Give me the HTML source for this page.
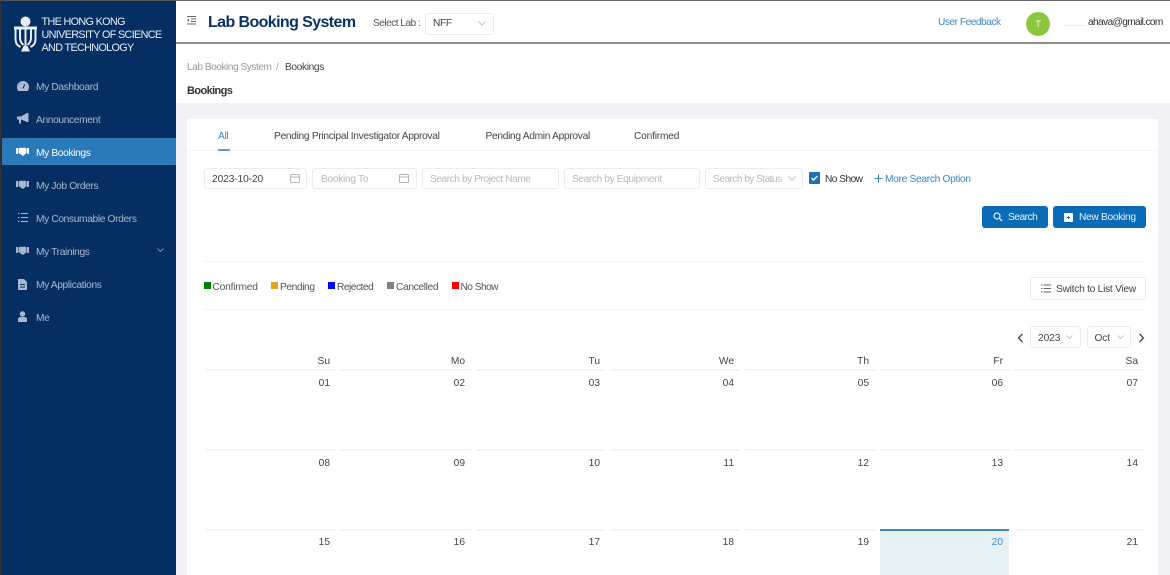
<!DOCTYPE html>
<html lang="en"><head><meta charset="utf-8"><title>Bookings</title>
<style>
html,body{margin:0;padding:0;width:1170px;height:575px;overflow:hidden;background:#fff;font-family:"Liberation Sans",sans-serif;color:#333}
*{box-sizing:border-box}
.a{position:absolute}
.t{position:absolute;white-space:nowrap;font-size:10.2px;line-height:14px;letter-spacing:-.35px;margin-top:1px}
.d{margin-top:2px}
.side{position:absolute;left:0;top:0;width:176px;height:575px;background:#052f63;border-left:1px solid #333;border-top:1px solid #555}
.nav{color:#a9b8cd;margin-top:2px}
.box{position:absolute;border:1px solid #ececec;border-radius:3px;background:#fff;height:22px}
.ph{color:#b9b9b9}
.btn{position:absolute;background:#0a6cb7;border-radius:3px;height:22px;top:206px}
.dl{position:absolute;background:#f3f3f5;height:2px}
.hd{position:absolute;white-space:nowrap;font-size:10.2px;line-height:14px;text-align:right;color:#444;width:40px;margin-top:2px}
.lg{position:absolute;white-space:nowrap;font-size:10.8px;line-height:14px;letter-spacing:-.65px;color:#e8edf3;left:41.5px}
svg{position:absolute;display:block}
</style></head><body>
<div class="a" style="left:0;top:0;width:1170px;height:1px;background:#666"></div>
<div class="a" style="left:176px;top:42px;width:994px;height:2px;background:#8c8c8c"></div>
<div class="a" style="left:176px;top:103px;width:994px;height:472px;background:#f0f2f6"></div>
<div class="a" style="left:187px;top:119px;width:971px;height:456px;background:#fff"></div>

<div class="side"></div>
<svg style="left:14px;top:16px" width="24" height="38" viewBox="0 0 24 38"><circle cx="11.500" cy="5.500" r="5" fill="#e8edf3"/><path d="M0 10.500h23v3H0z" fill="#e8edf3"/><path d="M1.500 13v10q0 6 5 8M21.500 13v10q0 6-5 8M6 13v9q0 4 3.500 7M17 13v9q0 4-3.500 7M11.500 13v18" fill="none" stroke="#e8edf3" stroke-width="2"/><path d="M9.500 30h4l2.500 5.500H7z" fill="#e8edf3"/></svg>
<div class="lg" style="top:15px">THE HONG KONG</div>
<div class="lg" style="top:28px">UNIVERSITY OF SCIENCE</div>
<div class="lg" style="top:41px">AND TECHNOLOGY</div>

<div class="a" style="left:2px;top:138px;width:174px;height:27px;background:#2a79b8"></div>

<svg style="left:17px;top:81px" width="12" height="10" viewBox="0 0 12 10"><path d="M6 0a6 6 0 0 0-6 6q0 2 1 4h10q1-2 1-4a6 6 0 0 0-6-6zM5.500 7l2-4 .8.400L6.500 7.500z" fill="#a9b8cd"/></svg>
<div class="t nav" style="left:36px;top:79px">My Dashboard</div>
<svg style="left:17px;top:113px" width="12" height="11" viewBox="0 0 12 11"><path d="M0 3.500h4L10 0h1.500v9H10L4 6.500v4H2v-4H0z" fill="#a9b8cd"/></svg>
<div class="t nav" style="left:36px;top:112px">Announcement</div>

<svg style="left:16px;top:147px" width="13" height="9" viewBox="0 0 13 9"><path d="M0 1h2v6H0zM11 1h2v6h-2zM2.500 1.500L5 .5l1.500.5L8.500.5l2 1v4.500L7 9 2.500 6z" fill="#fff"/></svg>
<div class="t nav" style="left:36px;top:145px;color:#fff">My Bookings</div>
<svg style="left:16px;top:180px" width="13" height="9" viewBox="0 0 13 9"><path d="M0 1h2v6H0zM11 1h2v6h-2zM2.500 1.500L5 .5l1.500.5L8.500.5l2 1v4.500L7 9 2.500 6z" fill="#a9b8cd"/></svg>
<div class="t nav" style="left:36px;top:178px">My Job Orders</div>
<svg style="left:18px;top:213px" width="10" height="9" viewBox="0 0 10 9"><path d="M3 0h7v1H3zM3 4h7v1H3zM3 8h7v1H3zM0 0h1.500v1H0zM0 4h1.500v1H0zM0 8h1.500v1H0z" fill="#a9b8cd"/></svg>
<div class="t nav" style="left:36px;top:211px">My Consumable Orders</div>
<svg style="left:16px;top:246px" width="13" height="9" viewBox="0 0 13 9"><path d="M0 1h2v6H0zM11 1h2v6h-2zM2.500 1.500L5 .5l1.500.5L8.500.5l2 1v4.500L7 9 2.500 6z" fill="#a9b8cd"/></svg>
<div class="t nav" style="left:36px;top:244px">My Trainings</div>
<svg style="left:157px;top:248px" width="7" height="4" viewBox="0 0 7 4"><path d="M.5.500l3 3 3-3" fill="none" stroke="#7f93ae"/></svg>
<svg style="left:18px;top:279px" width="9" height="11" viewBox="0 0 9 11"><path d="M0 0h6l3 3v8H0zM2 5v1h5V5zM2 7.500v1h5v-1z" fill="#a9b8cd"/></svg>
<div class="t nav" style="left:36px;top:277px">My Applications</div>
<svg style="left:18px;top:311px" width="9" height="11" viewBox="0 0 9 11"><circle cx="4.500" cy="3" r="2.700" fill="#a9b8cd"/><path d="M0 11V8.500Q0 6 3 6h3q3 0 3 2.500V11z" fill="#a9b8cd"/></svg>
<div class="t nav" style="left:36px;top:310px">Me</div>

<svg style="left:187px;top:16px" width="10" height="9" viewBox="0 0 10 9"><path d="M0 0h9v1H0zM4 2.500h5v1H4zM4 5h5v1H4zM0 7.500h9v1H0zM0 4.200l2-1.700v3.400z" fill="#666"/></svg>
<div class="t" style="left:208px;top:12px;font-size:16px;line-height:20px;font-weight:bold;color:#0a3266;letter-spacing:-.6px">Lab Booking System</div>
<div class="t" style="left:373px;top:16px;color:#555;letter-spacing:-.55px">Select Lab :</div>
<div class="box" style="left:425px;top:13px;width:69px"></div>
<div class="t" style="left:433px;top:16px;color:#444">NFF</div>
<svg style="left:478px;top:21px" width="8" height="5" viewBox="0 0 8 5"><path d="M.5.500L4 4 7.500.500" fill="none" stroke="#c4c4c4"/></svg>
<div class="t" style="left:938px;top:15px;color:#3f87c2;letter-spacing:-.5px">User Feedback</div>
<div class="a" style="left:1026px;top:12px;width:24px;height:24px;border-radius:50%;background:#8cc63f"></div>
<div class="t" style="left:1026px;top:16px;width:24px;text-align:center;color:#fff;font-size:9px">T</div>
<div class="a" style="left:1065px;top:24.500px;width:21px;height:1px;background:#efefef"></div>
<div class="t" style="left:1088px;top:15px;color:#333;letter-spacing:-.65px">ahava@gmail.com</div>

<div class="t" style="left:187px;top:60px;color:#9a9a9a;letter-spacing:-.5px">Lab Booking System</div>
<div class="t" style="left:276px;top:60px;color:#aaa">/</div>
<div class="t" style="left:285px;top:60px;color:#444;letter-spacing:-.37px">Bookings</div>
<div class="t" style="left:187px;top:82.500px;font-size:11px;font-weight:bold;color:#333;letter-spacing:-.6px">Bookings</div>

<div class="t d" style="left:218px;top:128px;color:#3d88c6">All</div>
<div class="a" style="left:187px;top:150px;width:971px;height:1px;background:#f5f5f6"></div>
<div class="a" style="left:218px;top:149px;width:12px;height:2px;background:#5b9fd4"></div>
<div class="t d" style="left:274px;top:128px;color:#444;letter-spacing:-.3px">Pending Principal Investigator Approval</div>
<div class="t d" style="left:485.500px;top:128px;color:#444;letter-spacing:-.3px">Pending Admin Approval</div>
<div class="t d" style="left:634px;top:128px;color:#444;letter-spacing:-.2px">Confirmed</div>

<div class="box" style="left:204px;top:168px;width:103px;height:21px"></div>
<div class="t d" style="left:212px;top:171px;color:#444;letter-spacing:-.1px">2023-10-20</div>
<svg style="left:290px;top:173px" width="10" height="10" viewBox="0 0 10 10"><rect x=".5" y="1.500" width="9" height="8" rx="1" fill="none" stroke="#b5b5b5"/><path d="M1 4h8" stroke="#b5b5b5"/></svg>
<div class="box" style="left:312px;top:168px;width:105px;height:21px"></div>
<div class="t d ph" style="left:321px;top:171px;letter-spacing:-.3px">Booking To</div>
<svg style="left:399px;top:173px" width="10" height="10" viewBox="0 0 10 10"><rect x=".5" y="1.500" width="9" height="8" rx="1" fill="none" stroke="#b5b5b5"/><path d="M1 4h8" stroke="#b5b5b5"/></svg>
<div class="box" style="left:422px;top:168px;width:137px;height:21px"></div>
<div class="t d ph" style="left:430px;top:171px;letter-spacing:-.45px">Search by Project Name</div>
<div class="box" style="left:564px;top:168px;width:136px;height:21px"></div>
<div class="t d ph" style="left:572px;top:171px;letter-spacing:-.4px">Search by Equipment</div>
<div class="box" style="left:705px;top:168px;width:98px;height:21px"></div>
<div class="t d ph" style="left:713px;top:171px;letter-spacing:-.56px">Search by Status</div>
<svg style="left:788px;top:176px" width="8" height="5" viewBox="0 0 8 5"><path d="M.5.500L4 4 7.500.500" fill="none" stroke="#c4c4c4"/></svg>
<div class="a" style="left:809px;top:172px;width:11px;height:12px;background:#1e6fb4;border-radius:1px"></div>
<svg style="left:810px;top:174px" width="9" height="8" viewBox="0 0 9 8"><path d="M1.500 4l2 2 4-4" fill="none" stroke="#fff" stroke-width="1.400"/></svg>
<div class="t d" style="left:825px;top:171px;color:#333;letter-spacing:-.55px">No Show</div>
<svg style="left:874px;top:174px" width="9" height="9" viewBox="0 0 9 9"><path d="M4.500 .5v8M.5 4.500h8" fill="none" stroke="#3a85c2"/></svg>
<div class="t d" style="left:885px;top:171px;color:#3a85c2;letter-spacing:-.3px">More Search Option</div>

<div class="btn" style="left:982px;width:66px"></div>
<svg style="left:993px;top:212px" width="10" height="10" viewBox="0 0 10 10"><circle cx="4" cy="4" r="3" fill="none" stroke="#e8f1f8" stroke-width="1.200"/><path d="M6.200 6.200L9 9" stroke="#e8f1f8" stroke-width="1.300"/></svg>
<div class="t" style="left:1008px;top:209.500px;color:#e8f1f8;letter-spacing:-.5px">Search</div>
<div class="btn" style="left:1053px;width:93px"></div>
<div class="a" style="left:1064px;top:213px;width:9px;height:9px;background:#fff;border-radius:1px"></div>
<div class="a" style="left:1067px;top:217px;width:3px;height:1px;background:#0a6cb7"></div>
<div class="a" style="left:1068px;top:216px;width:1px;height:3px;background:#0a6cb7"></div>
<div class="t" style="left:1079px;top:209.500px;color:#e8f1f8;letter-spacing:-.3px">New Booking</div>

<div class="a" style="left:204px;top:261px;width:942px;height:1px;background:#f4f4f5"></div>

<div class="a" style="left:204px;top:282px;width:7px;height:7px;background:#008000"></div>
<div class="t d" style="left:212.500px;top:278.500px;color:#555;letter-spacing:-.2px">Confirmed</div>
<div class="a" style="left:271px;top:282px;width:7px;height:7px;background:#daa520"></div>
<div class="t d" style="left:280px;top:278.500px;color:#555;letter-spacing:-.4px">Pending</div>
<div class="a" style="left:328px;top:282px;width:7px;height:7px;background:#0000ff"></div>
<div class="t d" style="left:337px;top:278.500px;color:#555;letter-spacing:-.5px">Rejected</div>
<div class="a" style="left:387px;top:282px;width:7px;height:7px;background:#808080"></div>
<div class="t d" style="left:396px;top:278.500px;color:#555;letter-spacing:-.35px">Cancelled</div>
<div class="a" style="left:451.500px;top:282px;width:7px;height:7px;background:#ff0000"></div>
<div class="t d" style="left:460.500px;top:278.500px;color:#555;letter-spacing:-.55px">No Show</div>

<div class="box" style="left:1030px;top:277px;width:116px;height:23px"></div>
<svg style="left:1041px;top:284px" width="10" height="9" viewBox="0 0 10 9"><path d="M2.500 .5h7.500v1H2.500zM2.500 4h7.500v1H2.500zM2.500 7.500h7.500v1H2.500zM0 .5h1.500v1H0zM0 4h1.500v1H0zM0 7.500h1.500v1H0z" fill="#666"/></svg>
<div class="t" style="left:1056px;top:281.500px;color:#444;letter-spacing:-.25px">Switch to List View</div>
<div class="a" style="left:204px;top:309px;width:942px;height:1px;background:#f4f4f5"></div>

<svg style="left:1017px;top:333px" width="7" height="10" viewBox="0 0 7 10"><path d="M5.500 1L1.500 5l4 4" fill="none" stroke="#444" stroke-width="1.300"/></svg>
<div class="box" style="left:1030px;top:326px;width:51px"></div>
<div class="t" style="left:1038px;top:330.500px;color:#444;letter-spacing:-.1px">2023</div>
<svg style="left:1066px;top:335px" width="7" height="4" viewBox="0 0 7 4"><path d="M.5.500l3 3 3-3" fill="none" stroke="#c4c4c4"/></svg>
<div class="box" style="left:1087px;top:326px;width:44px"></div>
<div class="t" style="left:1094.500px;top:330.500px;color:#444;letter-spacing:-.1px">Oct</div>
<svg style="left:1117px;top:335px" width="7" height="4" viewBox="0 0 7 4"><path d="M.5.500l3 3 3-3" fill="none" stroke="#c4c4c4"/></svg>
<svg style="left:1138px;top:333px" width="7" height="10" viewBox="0 0 7 10"><path d="M1.500 1l4 4-4 4" fill="none" stroke="#444" stroke-width="1.300"/></svg>

<div class="hd" style="left:290px;top:353px">Su</div><div class="hd" style="left:425px;top:353px">Mo</div><div class="hd" style="left:560px;top:353px">Tu</div><div class="hd" style="left:694px;top:353px">We</div><div class="hd" style="left:829px;top:353px">Th</div><div class="hd" style="left:963px;top:353px">Fr</div><div class="hd" style="left:1098px;top:353px">Sa</div>

<div class="dl" style="left:206px;top:369px;width:130px"></div><div class="dl" style="left:341px;top:369px;width:130px"></div><div class="dl" style="left:476px;top:369px;width:129px"></div><div class="dl" style="left:610px;top:369px;width:130px"></div><div class="dl" style="left:745px;top:369px;width:130px"></div><div class="dl" style="left:880px;top:369px;width:129px"></div><div class="dl" style="left:1014px;top:369px;width:130px"></div>
<div class="hd" style="left:290px;top:375px">01</div><div class="hd" style="left:425px;top:375px">02</div><div class="hd" style="left:560px;top:375px">03</div><div class="hd" style="left:694px;top:375px">04</div><div class="hd" style="left:829px;top:375px">05</div><div class="hd" style="left:963px;top:375px">06</div><div class="hd" style="left:1098px;top:375px">07</div>

<div class="dl" style="left:206px;top:449px;width:130px"></div><div class="dl" style="left:341px;top:449px;width:130px"></div><div class="dl" style="left:476px;top:449px;width:129px"></div><div class="dl" style="left:610px;top:449px;width:130px"></div><div class="dl" style="left:745px;top:449px;width:130px"></div><div class="dl" style="left:880px;top:449px;width:129px"></div><div class="dl" style="left:1014px;top:449px;width:130px"></div>
<div class="hd" style="left:290px;top:455px">08</div><div class="hd" style="left:425px;top:455px">09</div><div class="hd" style="left:560px;top:455px">10</div><div class="hd" style="left:694px;top:455px">11</div><div class="hd" style="left:829px;top:455px">12</div><div class="hd" style="left:963px;top:455px">13</div><div class="hd" style="left:1098px;top:455px">14</div>

<div class="dl" style="left:206px;top:529px;width:130px"></div><div class="dl" style="left:341px;top:529px;width:130px"></div><div class="dl" style="left:476px;top:529px;width:129px"></div><div class="dl" style="left:610px;top:529px;width:130px"></div><div class="dl" style="left:745px;top:529px;width:130px"></div><div class="dl" style="left:1014px;top:529px;width:130px"></div>
<div class="a" style="left:880px;top:529px;width:129px;height:46px;background:#e6f1f6;border-top:2px solid #3f88c5"></div>
<div class="hd" style="left:290px;top:534px">15</div><div class="hd" style="left:425px;top:534px">16</div><div class="hd" style="left:560px;top:534px">17</div><div class="hd" style="left:694px;top:534px">18</div><div class="hd" style="left:829px;top:534px">19</div><div class="hd" style="left:963px;top:534px;color:#3f88c5">20</div><div class="hd" style="left:1098px;top:534px">21</div>
</body></html>
